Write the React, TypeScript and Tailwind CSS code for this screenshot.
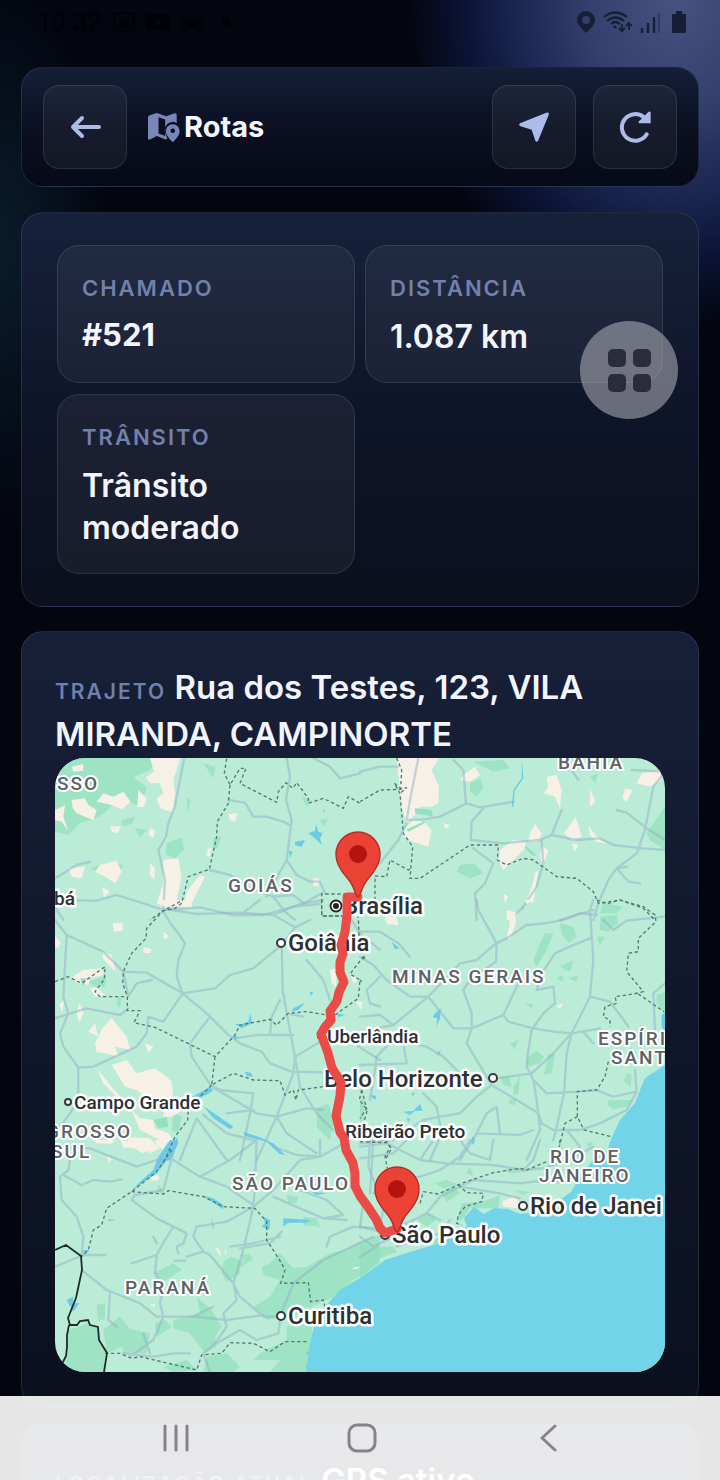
import type { ReactNode } from "react";

const card = "rounded-[22px] border border-[#a0b4dc]/15";
const label = "font-semibold uppercase tracking-[2px] text-[#7280ad]";

// The map is drawn in tiles. Tile paths use 3 units per map unit.
const tiles = [
  {
    x: 0,
    y: 620,
    forest:
      "M165 414H480L450 450 400 472 440 500 425 560 360 535 300 590 240 610 205 645 165 635ZM500 670L545 652 552 690 525 715 498 705ZM405 625L440 630 420 652ZM270 745L320 730 370 735 350 770 300 760ZM365 600L405 590 395 612 366 618ZM640 655L662 650 655 680 640 690ZM610 430L645 440 640 475ZM560 530L572 540 562 580ZM905 530L935 540 920 560ZM960 600L985 598 970 620Z",
    sand:
      "M450 414H540L530 450 520 480 525 520 520 578 480 565 470 535 490 520 480 490 450 490 437 470 462 455ZM310 520L340 530 370 515 392 545 365 568 335 555 290 545ZM215 540L255 535 265 555 290 570 280 600 255 590 230 580 218 565ZM165 570L195 555 190 590 204 632 185 605 165 600ZM415 510L440 535 432 560 412 562ZM205 745L255 740 245 775 215 770ZM300 735L350 722 365 755 345 790 315 770 285 755ZM490 720L535 715 545 770 530 840 500 865 470 850 490 790ZM600 765L615 770 590 820 570 862 550 855 560 815 580 790ZM332 620L362 618 355 640 335 635ZM450 625L465 632 460 655 445 645ZM685 582L712 580 706 605 690 600ZM215 440L250 432 250 452 220 455ZM305 800L330 815 312 832ZM450 730L465 745 462 780 450 765ZM940 775L958 775 955 800 940 797ZM625 685L635 685 628 710 618 705Z",
    roads:
      "M552 418L540 480 524 560 505 610 498 650 475 690 495 780 490 870M165 775L230 735 270 725M165 840L290 842 350 825 430 850 490 870 600 862 700 885 790 885 880 860 960 852M860 414L870 470 858 540 875 600 860 720 820 790 800 830M860 720L890 765 930 785 960 785 975 820M685 540L735 548 760 590 800 590 850 605 870 615M630 750L690 765 740 800 820 830 880 825 912 850 965 820M820 830L855 875 885 900M940 414L990 440 1020 475 1080 460M165 860L190 900",
    borders:
      "M680 416L673 460 690 495 720 445 738 445 720 490 830 547 835 515 858 488 878 505 890 488 925 535 925 550 970 535 1030 565 1045 530 1080 550M690 495L685 550 652 605 650 650 628 748 565 770 545 850 525 865 490 872 450 900M1040 822H965V888H1050",
    lakes:
      "M925 640L945 632 948 612 955 635 968 640 960 655 965 675 945 655ZM885 665L915 660 905 680 885 675ZM867 692L878 695 870 715ZM580 585L592 565 585 575ZM968 565L975 575 970 575Z",
  },
  {
    x: 360,
    y: 620,
    forest:
      "M330 490L360 475 370 505 350 530 330 515ZM300 735L340 730 370 760 330 775 290 755ZM690 470L715 460 705 490ZM860 640L915 560V690L870 660ZM730 850L790 860 770 880 720 880ZM340 425L430 420 450 445 400 455Z",
    sand:
      "M110 414H238L215 450 237 500 235 550 215 560 180 560 165 585 140 610 125 560 118 500ZM160 600L190 605 215 630 205 680 160 665 130 650 135 625ZM560 470L590 465 605 510 600 565 585 530 552 520 565 500ZM510 640L525 612 545 640 535 665 505 665ZM420 690L460 660 500 665 490 690 460 720 430 750 415 720ZM545 680L565 690 550 735 540 710ZM525 760L535 750 520 850 500 840 515 800ZM612 640L630 615 645 590 655 615 665 650 635 660ZM685 615L705 645 740 672 710 665 690 645ZM845 460L900 450 905 480 870 500 830 490ZM795 505L818 510 800 545 787 535ZM310 465L345 440 360 465 330 485 300 480ZM690 505L705 545 690 562ZM635 670L655 675 645 695ZM430 820L445 830 435 850ZM440 870L475 880 460 900H440ZM250 610L270 615 258 627ZM75 890L110 890 112 900H75Z",
    fields: "M165 565L215 570 218 590 165 580ZM140 628L195 603 190 612 145 635ZM495 675L530 705 520 708 500 690Z",
    roads:
      "M175 414L150 540 140 600 190 598 240 590 300 560 320 550 360 562 460 545M280 420L310 450 318 550M370 565L335 605 332 660 430 670 540 660 575 645 605 570M575 645L650 660 720 655 760 675 850 685 915 690M610 414L655 480M815 450L915 455 880 500 855 630 830 700 770 745 745 780 715 850 700 900M770 570L800 578 860 625 915 660M770 745L800 740M775 750L805 785 840 790M0 455L60 440 115 440M140 610L115 660 60 730 10 760M340 685L400 730 375 790 345 820 350 900M545 665L550 730 530 800 490 860 450 900M600 900L660 880 710 885",
    borders:
      "M110 414L125 450 122 505 103 490 120 520 130 640 158 680 150 775 180 775 330 675 415 675 412 720 440 735 490 715 520 720 590 770 650 775 700 815 715 850 780 840 850 865 885 900M0 545L60 510 120 508 140 503 120 520M45 840V768L80 770 90 720 145 750 155 745",
    lakes: "M485 414L490 475 464 512 460 560 455 560 460 510 485 475ZM485 862L490 862 490 870Z",
  },
  {
    x: 40,
    y: 900,
    forest:
      "M140 245L200 228 195 260 170 262ZM232 290L245 295 240 322 232 320ZM400 640L425 650 415 700 395 690ZM830 625L865 610 880 670 870 720 830 680Z",
    sand:
      "M218 70L248 68 248 92 222 95ZM90 235L130 210 185 205 190 225 150 235 145 255 115 250ZM190 155L215 165 228 215 205 195 188 175ZM370 95L388 110 372 118ZM310 142L335 148 330 160 310 158ZM365 0H455V22L420 20 370 18ZM45 110L62 125 55 145 45 140ZM118 308L130 340 118 370 110 340ZM58 315L72 300 68 335ZM165 430L190 380 215 355 260 410 270 450 225 440 235 470 195 460 170 455ZM145 395L165 370 175 410ZM215 495L260 480 290 520 345 505 380 530 395 545 400 600 430 630 395 650 370 650 375 625 330 600 290 570 255 560ZM170 505L210 555 250 600 230 592 190 550ZM315 430L340 440 325 458ZM275 630L300 655 340 660 345 685 385 700 410 735 360 720 300 690ZM270 712L330 715 360 745 330 760 300 735 250 745ZM870 210L890 205 888 260 875 250ZM930 220L955 240 940 250ZM948 305L968 305 960 325ZM150 265L170 262 195 285 165 290Z",
    fields: "M340 660L380 650 385 680 355 685ZM120 235L140 235 130 260Z",
    roads:
      "M385 28L470 42 600 38 700 45 780 12 850 0M370 35L395 75 415 100 435 130 415 180 410 230 428 280 370 365 325 350 320 400 290 440 160 500 115 503 70 440 60 400 85 340 70 290 75 200 80 105 45 60M80 105L190 155 250 215 320 218 428 280 525 265 570 225 640 205 725 135 728 270 740 340 765 470 760 520 710 650 650 780M250 215L265 290 290 250 335 240M428 280L500 340 560 400 600 430 665 455 690 490 755 515 880 518M510 350L450 430 455 470 515 560 600 610 650 640 710 650 800 625 850 630M610 38L660 0M700 45L765 82 810 60M765 82L725 135M800 180L850 240 870 300M115 503V600L90 640 45 700M520 560L540 570 640 580 630 640 600 780M490 645L560 700 640 720M560 640L640 630M710 650L740 700 830 760M45 355L140 325 240 345 265 325M765 470L850 420M740 340L790 350M580 415L650 405 760 405M560 780L470 655 420 780M690 405L695 350 720 300M765 470L780 560 830 640 880 690M935 60L960 100 1020 150M1020 230L980 270 990 310 1020 320M940 430L1020 480",
    borders:
      "M420 5L370 32 320 85 318 115 275 160 250 215 248 250 262 290V332H300L282 368 345 382 525 470 585 405 600 375 690 358 710 375 745 340 800 335 860 345M45 245L85 230 125 250 195 200 193 238 165 275 180 290H262M525 470L515 555 580 520 640 540 720 542 735 585 760 570 768 600 775 570 850 560M515 555L445 625 443 660 405 710 375 780M885 345L955 295 960 240 930 222 970 170 958 130 955 50M845 0V48H900M965 570L958 600 982 630 968 680",
    lakes:
      "M440 600L510 560 520 572 470 600ZM490 618L530 645 580 680 570 688 520 655ZM610 695L660 712 700 730 735 765 720 762 680 725 640 715 615 708ZM355 780L400 735 410 712 415 730 390 780ZM760 325L795 308 775 330 755 335ZM585 372L605 372 625 365 632 340 636 370 605 385ZM810 275L820 275 812 290ZM615 515L632 518 640 530 620 528ZM575 410L592 408 588 420ZM890 340L915 345 895 352Z",
  },
  {
    x: 360,
    y: 900,
    forest:
      "M555 100L580 100 560 150 530 200 520 180 540 130ZM720 50L770 45 775 70 745 95 720 90ZM600 70L640 80 650 110 625 130 605 100ZM710 110L735 110 720 138ZM500 475L530 452 552 470 540 490 505 500ZM565 462L585 460 575 520 550 525 560 495ZM420 530L450 530 455 560 430 555ZM460 560L480 530 475 580 462 588ZM890 285L915 275V340L890 310ZM800 520L815 525 812 560 792 545ZM745 600L815 600 800 620 760 628 742 615ZM590 235L608 225V245ZM625 235L655 225 648 245ZM450 430L475 420 465 450ZM495 312L520 312 515 325ZM600 200L640 180 630 215ZM445 600L470 595 465 615 450 612ZM0 600H15L10 660 0 670Z",
    sand: "M75 48L110 52 115 75 80 72ZM440 35L465 38 468 70 450 118 440 110 450 70ZM495 0H520L500 12ZM590 318L610 310 600 328ZM0 310L8 320 0 330Z",
    roads:
      "M350 0L355 30 410 130 440 115 500 75 555 70 610 60 650 45 700 30M410 130L408 185 330 240 310 270 335 340V385L320 430 350 480 395 555 470 600 535 640 545 670 580 690 660 690 720 670 800 630 830 575 825 510M0 95L60 95 115 130 150 170M0 170L40 195 80 240 150 290 205 290 280 385H335L430 345 470 260 480 250M205 290L100 375 0 395M205 290L300 190 350 180 408 130M430 345L445 365 520 385 580 395 635 400 720 385M635 400L690 290 750 305 780 345 805 380M690 290L700 180 690 30 700 0M690 115L640 135 585 160 545 220 530 270 580 260 585 310 550 340 515 390 505 450 500 500 520 540 530 600 540 690 500 780M635 400L620 460 612 580 590 680 580 720M635 400L580 460 515 520 410 535M520 540L560 580 650 575 710 570 760 590 830 575M720 385L670 395 700 430M730 60L760 90 800 62 915 50M915 250L880 280 885 390M130 430L200 440 250 470 300 520M130 385L50 470 45 510 30 600M130 430L140 490 0 495M395 555L350 590 300 640 240 650 190 660 100 720 0 730M190 580L230 620 245 700 210 780M420 700L410 620 380 640 350 700 300 780M350 700L480 705 520 690M0 350L60 345 100 375M620 690L660 740 640 780",
    borders:
      "M710 0L740 12 780 0 850 20 885 45 888 65 835 115V155L805 160 800 215 850 275 820 282 765 290 770 310 735 320 730 350 750 360 750 380M835 282L912 335M745 485L735 530 710 570 652 575V650L672 690 755 710M652 650L615 670 598 740M0 240L5 245M5 570L20 625 0 655M0 725L80 728 95 745 75 780M15 170L5 185",
    lakes:
      "M225 340L242 325 240 355 230 380 232 355 218 352ZM160 632L180 612 188 632ZM130 635L165 632 150 645ZM30 585L50 588 45 600ZM140 655L150 655 145 668ZM335 710L345 715 338 735ZM95 125L118 145 105 148ZM235 455L245 450 230 470ZM905 345L915 335V395L905 380ZM155 580L165 575 158 590Z",
  },
  {
    x: 40,
    y: 1140,
    forest:
      "M550 365L575 350 620 370 600 385 600 400 560 425 545 400ZM600 345L630 342 640 360 615 370ZM1020 285L950 310 920 330 870 340 800 380 760 385 720 340 690 370 665 380 670 405 720 420 690 470 640 500 680 540 740 530 800 520 815 500 880 470 940 420 1020 370ZM740 560L820 540 800 697H690L720 660 640 660 660 640 740 600ZM340 400L400 370 425 390 370 425ZM470 470L515 510 545 560 525 590 530 620 495 640 450 580 400 565 400 540 480 520ZM170 495L195 490 195 535 175 545ZM85 570L145 550 170 560 180 600 195 630 190 697H75ZM190 570L240 530 280 580 270 610 200 640ZM345 550L375 540 395 560 350 590ZM560 640L600 680 580 697H490L500 650ZM740 165L775 170 770 190 745 190ZM790 230L830 235 840 260 790 255ZM370 680L440 660 470 690 400 697ZM240 560L330 580 320 640 250 640ZM355 130L375 165 352 155Z",
    sand: "M240 0L300 10 340 20 310 40 280 25 250 20ZM160 0H225L215 12 170 10ZM200 50L215 55 208 70ZM345 0H385L370 30 350 15ZM330 110L355 105 358 120 335 122ZM525 325L535 325 545 345 540 345ZM555 320L560 345 555 340ZM330 495L348 490 340 502ZM930 385L960 380 950 388Z",
    roads:
      "M90 60L85 90 60 110 65 180 110 230 130 290 125 345M70 105L125 135 160 120 210 125 245 118M45 20L150 25 290 80 350 60 400 60 480 110 560 140 640 195M410 0L370 150 285 165 275 180 350 235 400 260 375 300 350 345 275 370M400 260L440 280 430 310 410 320 415 340M340 290L350 310M405 362H435M440 350L490 335 510 345 580 430 600 470 670 530 720 530 740 480 760 430 850 360 1000 290M490 335L460 290 470 260 560 245 640 200 645 130 650 0M640 200L610 330 580 430 590 480 550 520 560 560 525 610M640 200L700 150 780 60 840 50 930 0M700 170L780 205 850 235 920 240M570 320L640 310 720 290M600 325L690 310 725 275M130 345L45 380M125 345L195 345M125 390L200 450 250 470 300 490 350 530 460 530 520 500M350 350L345 400 370 440 360 490 370 530 340 600 270 650M210 460L205 540 230 560M525 610L490 640 510 697M460 530L560 540 670 525M720 540L715 580 650 600 600 570 530 610M850 235L910 225 860 180 780 150M1020 265L940 260 870 290 860 320M950 120L970 180 960 265M990 160L1000 0M700 20L770 45 840 50 840 0M480 110L570 60 650 0M800 640L815 635 810 670 800 675M250 640L340 650 400 640 450 640M310 580L330 640",
    borders:
      "M395 30L350 95 275 155 200 205 185 255 160 270 145 330 125 350M275 155L370 162 385 152 490 170 550 200 645 205 680 245V300L725 370 735 390 722 430 805 428 812 485 850 480 855 500M195 640H240L275 655 300 650 470 690 485 645 545 640 570 608 640 610 690 635 735 605H805",
    lakes:
      "M390 0H410L390 50 350 100 275 152 300 125 340 90 355 50ZM485 165L520 175 550 195 548 208 520 188ZM670 230L690 240 688 270 665 260 675 250ZM730 235L810 240 800 248 745 248 730 260ZM205 238L230 240 205 243ZM515 230L518 265 522 265ZM80 480L100 470 100 490 118 490 100 515ZM130 330L150 330 130 345ZM680 0L700 15 735 45 715 38ZM815 155L860 160 830 165Z",
  },
  {
    x: 360,
    y: 1140,
    forest:
      "M240 155L285 140 300 160 260 185ZM170 240L205 220 230 240 200 260ZM305 190L370 185 420 165 415 205 400 205 330 205 310 235 290 250ZM0 310L40 320 100 320 110 335 60 355 0 418ZM225 130L260 120 300 135 250 145ZM380 185L410 180 405 200ZM460 150L510 155 490 165ZM320 100L330 80 340 110ZM220 300L245 290 240 320 220 318ZM430 90L480 85 500 95 450 100ZM680 10L700 5 690 25Z",
    sand: "M425 185L460 170 480 185 470 205 430 200Z",
    roads:
      "M0 55L100 40 140 0M0 20L80 10 180 60 260 70 400 75 490 90 550 85 640 55 700 20M180 60L220 0M330 0L300 50 240 90 180 110 60 130M30 0L25 80 70 200 60 270M300 0L330 40 390 60 400 0M540 0L520 60 490 90M120 260L200 220 240 170 300 140 420 160 480 175M0 260L60 275 120 260M0 290L40 320 120 280M110 320L180 295 240 280 270 240M300 140L340 120 480 130 560 120 610 130 640 110M200 220L240 240M0 350L50 320M85 120L40 160",
    borders:
      "M75 0L90 20 75 50 82 85M180 190L190 155 235 162 310 128 400 98 480 85 500 90 560 65M295 135L320 158 370 160 365 185 315 200 295 225 290 250 305 255M600 0L598 20",
    lakes: "M340 230L370 222 365 237ZM330 0L345 0 340 15Z",
  },
];

const cities = [
  { name: "bá", x: 54, y: 905, size: 19 },
  { name: "Brasília", x: 343, y: 914, size: 24 },
  { name: "Goiânia", x: 288, y: 951, size: 24, dot: [281, 943, 4] },
  { name: "Uberlândia", x: 327, y: 1043, size: 19, dot: [321, 1036, 3] },
  { name: "Belo Horizonte", x: 324, y: 1087, size: 24, dot: [493, 1078, 4] },
  { name: "Campo Grande", x: 74, y: 1109, size: 19, dot: [68, 1102, 3] },
  { name: "Ribeirão Preto", x: 345, y: 1138, size: 19, dot: [340, 1132, 3] },
  { name: "Rio de Janei", x: 530, y: 1214, size: 24, dot: [523, 1206, 4] },
  { name: "São Paulo", x: 392, y: 1243, size: 24, dot: [385, 1235, 4] },
  { name: "Curitiba", x: 288, y: 1324, size: 24, dot: [281, 1316, 4] },
];

const states = [
  { name: "SSO", x: 57, y: 790 },
  { name: "BAHIA", x: 558, y: 769 },
  { name: "GOIÁS", x: 228, y: 892 },
  { name: "MINAS GERAIS", x: 392, y: 983 },
  { name: "ESPÍRI", x: 598, y: 1045 },
  { name: "SANT", x: 611, y: 1064 },
  { name: "GROSSO", x: 46, y: 1138 },
  { name: "SUL", x: 51, y: 1158 },
  { name: "RIO DE", x: 550, y: 1163 },
  { name: "JANEIRO", x: 539, y: 1182 },
  { name: "SÃO PAULO", x: 232, y: 1190 },
  { name: "PARANÁ", x: 125, y: 1294 },
];

function Pin({ x, y }: { x: number; y: number }) {
  return (
    <g transform={`translate(${x} ${y})`}>
      <path
        d="M0 1C-3 0-3-7-7-13-11-19-15-22-18-28-21-33-22-37-22-42a22 22 0 0 1 44 0C22-37 21-33 18-28 15-22 11-19 7-13 3-7 3 0 0 1Z"
        fill="#ea4335"
        stroke="#b92b22"
        strokeWidth="1.4"
      />
      <circle cy="-42" r="9" fill="#b31412" />
    </g>
  );
}

function RouteMap() {
  return (
    <svg
      viewBox="55 758 610 614"
      className="block w-full rounded-[30px] font-[Roboto,sans-serif]"
      role="img"
      aria-label="Mapa da rota"
    >
      <rect x="55" y="758" width="610" height="614" fill="#bbecd7" />
      {tiles.map((t) => (
        <g
          key={`${t.x}-${t.y}`}
          transform={`translate(${t.x} ${t.y}) scale(${1 / 3})`}
          strokeLinejoin="round"
        >
          <path d={t.forest} fill="#93e0be" fillOpacity="0.75" />
          <path d={t.sand} fill="#f6f0e6" />
          {t.fields && <path d={t.fields} fill="#93e0be" />}
          <path d={t.lakes} fill="#6ccbe6" />
          <path
            d={t.roads}
            fill="none"
            stroke="#93b0c8"
            strokeOpacity="0.5"
            strokeWidth="7"
            strokeLinecap="round"
          />
        </g>
      ))}
      <path
        d="M665 1065L645 1078 640 1090 635 1103 620 1120 612 1137 607 1150 593 1160 580 1177 571 1192 560 1200 540 1212 520 1214 508 1209 494 1208 484 1214 474 1207 464 1218 467 1227 440 1243 410 1252 385 1260 360 1278 340 1290 330 1301 316 1318 310 1343 306 1372H665Z"
        fill="#72d4e8"
      />
      {tiles.map((t) => (
        <path
          key={`${t.x}-${t.y}`}
          transform={`translate(${t.x} ${t.y}) scale(${1 / 3})`}
          d={t.borders}
          fill="none"
          stroke="#557a72"
          strokeWidth="4"
          strokeDasharray="10 8"
        />
      ))}
      <path
        d="M55 1250L66 1245 81 1256 82 1270 76 1298 68 1318 70 1325 77 1325 80 1321 88 1320 90 1325 98 1327 99 1340 107 1353 104 1372M69 1325L67 1335 67 1347 66 1356 62 1364"
        fill="none"
        stroke="#1f2b2b"
        strokeWidth="1.8"
      />

      <g strokeLinejoin="round" paintOrder="stroke" stroke="#fff" fontWeight="500">
        {states.map((s) => (
          <text
            key={s.name}
            x={s.x}
            y={s.y}
            fontSize="19"
            letterSpacing="2"
            strokeWidth="4"
            fill="#5c6266"
          >
            {s.name}
          </text>
        ))}
        {cities.map((c) => (
          <text key={c.name} x={c.x} y={c.y} fontSize={c.size} strokeWidth="5" fill="#2c3033">
            {c.name}
          </text>
        ))}
      </g>
      {cities.map(
        (c) =>
          c.dot && (
            <circle
              key={c.name}
              cx={c.dot[0]}
              cy={c.dot[1]}
              r={c.dot[2]}
              fill="#fff"
              stroke="#35393c"
              strokeWidth="2"
            />
          )
      )}
      <circle cx="336" cy="906" r="5.5" fill="#fff" stroke="#222" strokeWidth="1.8" />
      <circle cx="336" cy="906" r="3" fill="#222" />

      <path
        d="M358 897L347 897 347 915 345 932 341 945 343 954 340 962 340 972 344 982 339 992 337 1001 330 1011 331 1020 325 1027 321 1034 328 1053 332 1068 341 1082 340 1096 336 1116 340 1132 344 1138 346 1150 353 1163 355 1174 355 1186 360 1196 368 1207 376 1219 380 1228 385 1233 397 1229"
        fill="none"
        stroke="#ea4b47"
        strokeWidth="9"
        strokeLinejoin="round"
        strokeLinecap="round"
      />
      <Pin x={358} y={896} />
      <Pin x={397} y={1231} />
    </svg>
  );
}

function StatusBar() {
  return (
    <div className="flex h-[43px] items-center justify-between pr-[34px] pl-[37px]">
      <div className="flex items-center gap-[10px] text-black opacity-50">
        <span className="font-[Roboto,sans-serif] text-[26px] leading-8">10:32</span>
        <svg viewBox="0 0 24 20" className="h-5 w-6" fill="none" stroke="currentColor" strokeWidth="2">
          <rect x="2" y="1" width="20" height="18" rx="2" />
          <path d="M5 15l5-6 4 4 2-2 4 4z" fill="currentColor" />
        </svg>
        <svg viewBox="0 0 24 18" className="h-[18px] w-6" fillRule="evenodd">
          <path d="M4 1h16q4 0 4 4v8q0 4-4 4H4q-4 0-4-4V5q0-4 4-4zm6 4v8l6-4z" fill="currentColor" />
        </svg>
        <svg viewBox="0 0 24 18" className="h-[18px] w-6" fill="none" stroke="currentColor" strokeWidth="2">
          <path d="M2 17V3l10 8 10-8v14h-4V9l-6 5-6-5v8z" />
        </svg>
        <span className="ml-2 size-2 rounded-full bg-black" />
      </div>
      <div className="flex items-center gap-2 text-[#171f38]">
        <svg viewBox="0 0 18 22" className="h-[22px] w-[18px]" fill="currentColor" fillRule="evenodd">
          <path d="M9 0a9 9 0 0 1 9 9q0 5-9 13Q0 14 0 9a9 9 0 0 1 9-9zm0 5a4 4 0 1 0 0 8 4 4 0 0 0 0-8z" />
        </svg>
        <svg viewBox="0 0 29 22" className="h-[22px] w-[29px]" fill="none" stroke="currentColor" strokeWidth="2.2">
          <path d="M1 6q11-9 23 0M4 10q8-7 17 0M8 13q4-4 9 0" />
          <circle cx="12" cy="16" r="1.6" fill="currentColor" stroke="none" />
          <path d="M19 13v7M16 17l3 3 3-3M26 19v-7M23 15l3-3 3 3" strokeWidth="1.8" />
        </svg>
        <svg viewBox="0 0 20 22" className="h-[22px] w-5" fill="none" stroke="currentColor" strokeWidth="2.4">
          <path d="M2 22v-5M8 22V12M14 22V6" />
          <path d="M19 22V2" strokeOpacity="0.35" />
        </svg>
        <svg viewBox="0 0 14 22" className="ml-1 h-[22px] w-[14px]" fill="currentColor">
          <path d="M4 0h6v3h4v19H0V3h4z" />
        </svg>
      </div>
    </div>
  );
}

function IconButton({ title, children }: { title: string; children: ReactNode }) {
  return (
    <button
      type="button"
      aria-label={title}
      className="flex size-[84px] shrink-0 items-center justify-center rounded-2xl border border-white/10 bg-white/5 text-[#adbbe8]"
    >
      {children}
    </button>
  );
}

function Stat({ name, children }: { name: string; children: ReactNode }) {
  return (
    <div className="rounded-[22px] border border-white/10 bg-white/5 px-6 pt-[26px] pb-6">
      <dt className={`${label} text-[22px] leading-8`}>{name}</dt>
      <dd className="mt-3 text-[32px] leading-[42px] font-semibold text-[#f2f5ff]">{children}</dd>
    </div>
  );
}

export default function App() {
  return (
    <div className="relative h-screen overflow-hidden bg-[#03050f] bg-[radial-gradient(270px_330px_at_94%_0px,#465280_0%,#34406e_32%,#1a2650_60%,#0c1436_78%,transparent_100%),radial-gradient(110px_280px_at_0_250px,#0a1c2b,transparent)] font-[Inter,sans-serif]">
      <StatusBar />

      <main className="flex flex-col px-[21px] pt-6">
        <header
          className={`${card} flex items-center bg-linear-to-b from-[#141f37] via-[#0b1022] to-[#060917] px-[21px] py-[17px]`}
        >
          <IconButton title="Voltar">
            <svg viewBox="0 0 31 24" className="h-6 w-[31px]" fill="none" stroke="currentColor" strokeWidth="4" strokeLinecap="round" strokeLinejoin="round">
              <path d="M29 12H3M12 3L3 12l9 9" />
            </svg>
          </IconButton>
          <h1 className="ml-5 flex items-center gap-1 text-[29px] leading-9 font-bold text-[#f4f6ff]">
            <svg viewBox="0 0 100 92" className="h-[31px] w-[33px] text-[#7886b8]" fill="currentColor" fillRule="evenodd">
              <path d="M3 16Q3 11 8 9L30 2 58 12 84 3Q90 2 90 8V32Q82 27 74 29 56 33 54 52 54 62 62 80L56 82 30 72 9 82Q3 84 3 79ZM35 15V64L55 72V22Z" />
              <path d="M78 36a21 21 0 0 1 21 21Q99 70 78 91 57 70 57 57A21 21 0 0 1 78 36zm0 13a7 7 0 1 0 0 14 7 7 0 0 0 0-14z" />
            </svg>
            Rotas
          </h1>
          <div className="ml-auto flex gap-[17px]">
            <IconButton title="Navegar">
              <svg viewBox="0 0 90 90" className="size-[30px]" fill="currentColor">
                <path d="M3 34Q-1 37 2 41L5 43 38 53 49 86Q52 92 57 87L89 9Q91 0 82 2Z" />
              </svg>
            </IconButton>
            <IconButton title="Atualizar">
              <svg viewBox="0 0 96 96" className="size-8" fill="none" stroke="currentColor" strokeWidth="12" strokeLinecap="round">
                <path d="M83 70A40 40 0 1 1 76 20" />
                <path d="M95 4V37H60Q57 34 60 31L88 3Q94 0 95 4Z" fill="currentColor" stroke="none" />
              </svg>
            </IconButton>
          </div>
        </header>

        <section
          className={`${card} mt-[25px] bg-linear-to-b from-[#16213b] via-[#0f1529] to-[#0a101d] px-[35px] py-8`}
        >
          <dl className="grid grid-cols-2 gap-x-[10px] gap-y-[11px]">
            <Stat name="Chamado">
              <span className="block text-[31px] leading-[38px] font-bold">#521</span>
            </Stat>
            <Stat name="Distância">1.087 km</Stat>
            <Stat name="Trânsito">Trânsito moderado</Stat>
          </dl>
        </section>

        <section
          className={`${card} mt-6 bg-linear-to-b from-[#182039] via-[#10172b] to-[#0a101e] px-[33px] pt-8 pb-[35px]`}
        >
          <h2 className="text-[33px] leading-[47px] font-semibold text-[#f2f5ff]">
            <span className={`${label} text-[21px] leading-none`}>Trajeto</span> Rua dos Testes,
            123, VILA MIRANDA, CAMPINORTE
          </h2>
          <RouteMap />
        </section>

        <section
          className={`${card} mt-4 bg-linear-to-b from-[#182039] to-[#0a101e] px-[33px] py-8`}
        >
          <h2 className="text-[33px] leading-[47px] font-semibold text-[#f2f5ff]">
            <span className={`${label} text-[21px] leading-none`}>Localização atual</span> GPS
            ativo
          </h2>
        </section>
      </main>

      <button
        type="button"
        aria-label="Menu"
        className="absolute top-[321px] right-[42px] flex size-[98px] items-center justify-center rounded-full bg-[#b4b4bb]/55"
      >
        <span className="grid grid-cols-2 gap-[7px]">
          <span className="size-[18px] rounded-[5px] bg-[#1d212e]/85" />
          <span className="size-[18px] rounded-[5px] bg-[#1d212e]/85" />
          <span className="size-[18px] rounded-[5px] bg-[#1d212e]/85" />
          <span className="size-[18px] rounded-[5px] bg-[#1d212e]/85" />
        </span>
      </button>

      <nav className="absolute inset-x-0 bottom-0 flex h-[84px] items-center justify-evenly bg-white/90 pl-1 text-[#858587]">
        <button type="button" aria-label="Recentes">
          <svg viewBox="0 0 28 28" className="size-7" stroke="currentColor" strokeWidth="3" strokeLinecap="round">
            <path d="M3 2v24M14 2v24M25 2v24" />
          </svg>
        </button>
        <button type="button" aria-label="Início">
          <svg viewBox="0 0 30 30" className="size-[30px]" fill="none" stroke="currentColor" strokeWidth="3">
            <rect x="2" y="2" width="26" height="26" rx="8" />
          </svg>
        </button>
        <button type="button" aria-label="Voltar">
          <svg viewBox="0 0 28 28" className="size-7" fill="none" stroke="currentColor" strokeWidth="3" strokeLinecap="round" strokeLinejoin="round">
            <path d="M20 2L7 14l13 12" />
          </svg>
        </button>
      </nav>
    </div>
  );
}
